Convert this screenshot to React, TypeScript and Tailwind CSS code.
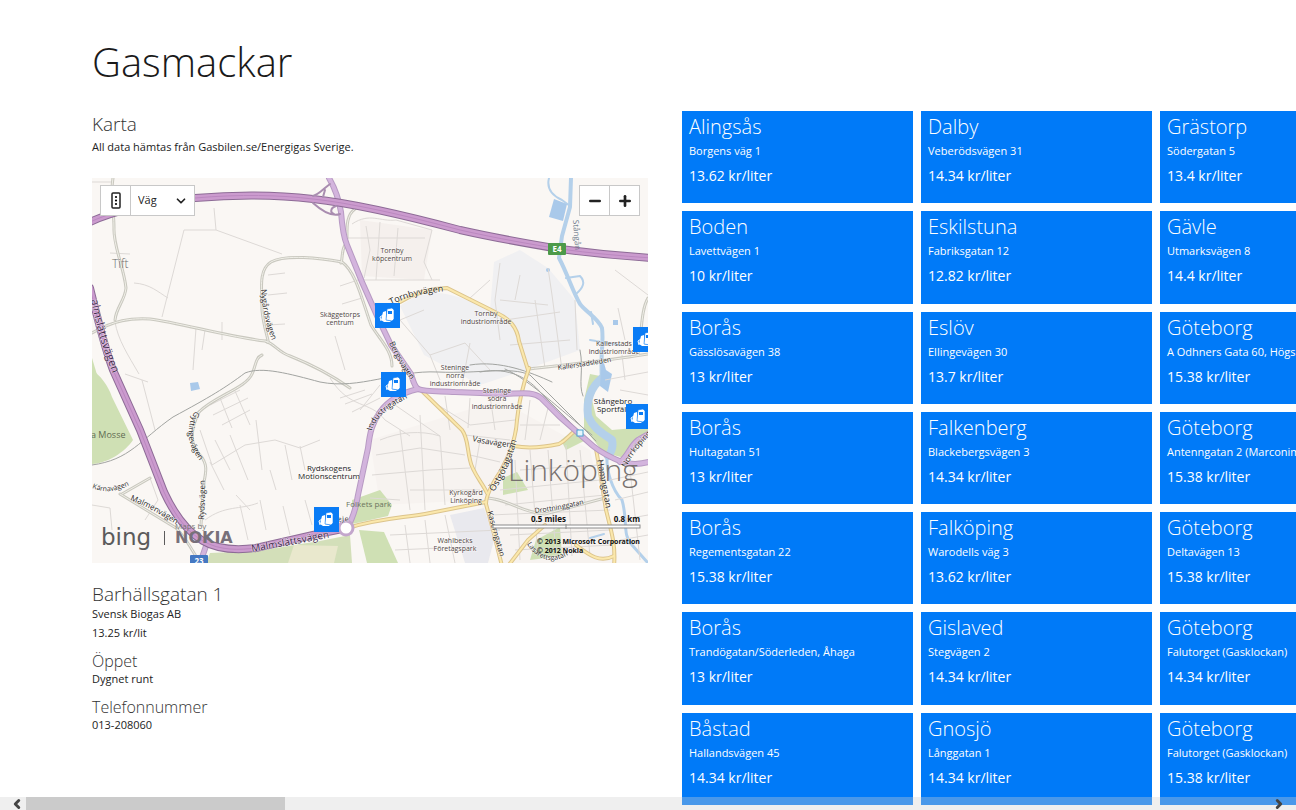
import { ChevronDown, ChevronLeft, ChevronRight, Minus, Plus } from 'lucide-react';

type Station = { city: string; street: string; price: string };

const stations: Station[] = [
  { city: 'Alingsås', street: 'Borgens väg 1', price: '13.62' },
  { city: 'Boden', street: 'Lavettvägen 1', price: '10' },
  { city: 'Borås', street: 'Gässlösavägen 38', price: '13' },
  { city: 'Borås', street: 'Hultagatan 51', price: '13' },
  { city: 'Borås', street: 'Regementsgatan 22', price: '15.38' },
  { city: 'Borås', street: 'Trandögatan/Söderleden, Åhaga', price: '13' },
  { city: 'Båstad', street: 'Hallandsvägen 45', price: '14.34' },
  { city: 'Dalby', street: 'Veberödsvägen 31', price: '14.34' },
  { city: 'Eskilstuna', street: 'Fabriksgatan 12', price: '12.82' },
  { city: 'Eslöv', street: 'Ellingevägen 30', price: '13.7' },
  { city: 'Falkenberg', street: 'Blackebergsvägen 3', price: '14.34' },
  { city: 'Falköping', street: 'Warodells väg 3', price: '13.62' },
  { city: 'Gislaved', street: 'Stegvägen 2', price: '14.34' },
  { city: 'Gnosjö', street: 'Långgatan 1', price: '14.34' },
  { city: 'Grästorp', street: 'Södergatan 5', price: '13.4' },
  { city: 'Gävle', street: 'Utmarksvägen 8', price: '14.4' },
  { city: 'Göteborg', street: 'A Odhners Gata 60, Högsbo', price: '15.38' },
  { city: 'Göteborg', street: 'Antenngatan 2 (Marconimotet)', price: '15.38' },
  { city: 'Göteborg', street: 'Deltavägen 13', price: '15.38' },
  { city: 'Göteborg', street: 'Falutorget (Gasklockan)', price: '14.34' },
  { city: 'Göteborg', street: 'Falutorget (Gasklockan)', price: '15.38' },
];

const MAP_W = 556;
const MAP_H = 385;

const pins = [
  { id: 'tornby', label: 'Tornbyvägen', x: 283, y: 125 },
  { id: 'bergsvagen', label: 'Bergsvägen', x: 289, y: 194 },
  { id: 'kallerstad', label: 'Kallerstad', x: 541, y: 149 },
  { id: 'stangebro', label: 'Stångebro', x: 534, y: 226 },
  { id: 'barhall', label: 'Barhällsgatan 1', x: 222, y: 329 },
];

const motorways = [
  'M88 223 C110 212 150 202 195 198 C240 194 280 195 313 199 C350 203 400 214 460 230 C500 239 530 244 560 249 C590 253 620 256 652 258',
  'M90 288 C98 320 104 346 113 370 L140 430 L164 492 C176 518 188 532 203 541 C220 551 240 550 256 548 L313 535 L347 528',
];

const primaryRoads = [
  'M329 178 C336 190 339 200 341 212 C342 225 343 236 347 245 L362 282 L378 318 L391 345 L411 374 C413 380 414 386 418 389',
  'M418 389 C425 392 440 391 455 392 L505 394 C525 393 534 392 541 398 L560 417 L593 446 C603 454 612 458 622 462 C632 465 640 465 652 461',
  'M418 389 C400 393 388 401 380 412 C372 423 370 432 368 448 L358 495 C356 508 352 520 347 528',
  'M620 462 C628 456 630 446 638 440 L652 432',
  'M206 546 L199 566',
];

const yellowRoads = [
  'M400 302 C415 293 430 288 447 288 L495 312 C510 319 517 327 519 341 L528 370',
  'M529 368 C523 385 519 400 517 420 C516 440 508 458 500 472 C492 484 486 495 486 504 L493 530 L502 566',
  'M422 391 L462 430 C468 438 467 448 470 460 C472 472 482 482 487 493',
  'M348 528 C380 518 405 518 430 513 L486 502',
  'M514 446 C530 449 545 447 559 444 C567 440 569 435 575 431',
  'M596 449 C599 465 602 485 606 510 C611 530 616 545 614 566',
  'M508 566 L528 540 L545 525',
  'M576 545 C590 556 600 563 614 556',
];

const grayRoads = [
  'M113 178 C110 195 114 210 114 228 C113 245 124 268 126 288 C125 300 116 308 115 320',
  'M92 333 C115 320 130 318 150 319 C180 323 230 337 265 341 C275 344 278 352 290 356 C310 364 330 374 350 388',
  'M266 341 C272 347 264 332 262 310 C262 290 258 270 271 262 C285 254 320 258 342 262 C356 272 362 300 371 325 C380 340 392 350 392 366',
  'M345 245 C341 252 343 258 341 263',
  'M262 355 C255 358 256 366 252 374 C246 388 215 396 199 412',
  'M199 412 C190 430 190 445 200 455 C208 464 206 472 204 482 L201 525',
  'M122 494 L150 478 M120 494 L176 528 C188 540 195 556 202 566',
  'M529 369 C560 365 600 362 648 354 M638 355 C642 330 641 310 648 298',
  'M355 209 C346 215 347 228 347 238',
  'M488 498 C510 500 520 512 545 514 L605 498',
];

const railways = [
  'M92 465 C130 460 140 440 173 417 C210 397 225 388 245 373 C262 366 290 374 320 382 C360 390 395 370 438 372 C480 374 510 366 530 375 L596 441',
  'M470 365 C500 360 530 372 552 382 M505 369 C530 380 560 410 592 435 M583 396 C578 384 584 370 580 350',
  'M480 372 C510 366 530 380 540 392 L588 440',
];

const smallStreets = [
  // north and west
  'M92 182 H112 M214 208 L216 230 L184 230 L162 317 M216 230 L282 254 M134 283 C150 284 158 292 168 298 M110 253 L130 254',
  'M115 322 C118 340 128 355 139 374 M196 328 L193 370 M205 330 L202 350 M222 322 L222 340 M268 275 L285 273 M268 295 L287 293 M268 325 L285 324',
  'M335 336 L345 370 M358 280 L340 286 M362 298 L342 304 M352 224 C370 212 380 222 396 220 L432 230 L424 262 L432 280 M366 226 L370 250 L364 278 M380 222 L376 280 M360 280 H440 M398 228 L394 276 M348 238 H425',
  'M500 263 L495 300 L500 340 M500 300 L548 305 M505 320 L560 312 M548 268 L552 295 L562 370 M520 275 L515 300 M510 345 L570 340 M470 298 L490 280 M535 300 L545 368 M575 300 L577 350',
  'M615 270 L648 295 M618 308 L625 340 M622 355 L625 380 M605 380 L648 372 M400 320 L430 355 L465 343 L490 370 M400 320 L424 310 M430 355 L440 380 M470 343 L462 385',
  // Ryd
  'M210 405 L240 390 M213 415 L248 398 M222 425 L250 410 M220 398 L232 428 M235 391 L250 425 M200 430 L212 465 L245 445 L275 440 L300 448 L320 440',
  'M215 440 L230 470 M230 435 L248 480 M256 420 L262 470 M210 462 L224 490 M285 445 L292 480 M300 446 L305 470 M205 520 C225 505 240 510 258 503 M240 505 L248 540 M260 500 L266 530 M283 506 L290 535 M305 500 L312 525',
  'M142 380 L155 430 M125 374 L148 382 M150 478 L158 500 L145 520 M92 505 L110 508 L112 530 M236 495 L250 510 M270 470 L276 490',
  'M330 378 C350 410 370 400 385 420 M340 398 L365 390 M345 404 L372 394 M352 412 L380 398 M380 385 L360 410',
  // city centre
  'M380 440 C400 432 420 430 440 436 M376 455 L420 448 L465 455 M372 475 L430 470 L470 468 M400 430 L410 510 M420 415 L425 510 M440 436 L445 505 M385 420 L410 436 M395 405 L440 436 M410 490 L480 490 M370 498 L400 500',
  'M430 400 L470 425 L515 420 M445 396 L450 430 M470 398 L468 428 M490 396 L495 430 M465 435 L510 440 M480 440 L475 470 M470 455 L500 462 M530 400 L525 440 M548 408 L540 440 M520 425 L560 425',
  'M500 490 L600 480 M505 505 L605 495 M490 515 L610 510 M515 460 L520 560 M530 450 L538 555 M548 450 L556 555 M566 445 L572 556 M580 450 L590 556 M510 535 L610 530 M515 550 L612 545 M520 470 L600 465',
  'M425 520 L430 563 M445 515 L455 563 M405 525 L410 563 M390 535 L500 530 M395 550 L440 548 M610 480 L648 472 M615 500 L648 492 M620 520 L648 515 M620 540 L648 535 M630 470 L640 560 M620 390 L648 395 M610 400 L648 410',
];

const horizontalLabels: Array<{ x: number; y: number; lines: string[]; dark?: boolean }> = [
  { x: 392, y: 253, lines: ['Tornby', 'köpcentrum'] },
  { x: 340, y: 317, lines: ['Skäggetorps', 'centrum'] },
  { x: 486, y: 316, lines: ['Tornby', 'industriområde'] },
  { x: 614, y: 346, lines: ['Kallerstads', 'industriområde'] },
  { x: 455, y: 370, lines: ['Steninge', 'norra', 'industriområde'] },
  { x: 497, y: 393, lines: ['Steninge', 'södra', 'industriområde'] },
  { x: 613, y: 404, lines: ['Stångebro', 'Sportfält'], dark: true },
  { x: 329, y: 471, lines: ['Rydskogens', 'Motionscentrum'], dark: true },
  { x: 466, y: 495, lines: ['Kyrkogård', 'Linköping'] },
  { x: 455, y: 543, lines: ['Wahlbecks', 'Företagspark'] },
];

const roadLabels = [
  { id: 'malmslatt-w', d: 'M91 300 C96 325 102 350 118 386', text: 'almslättsvägen', size: 11 },
  { id: 'malmslatt-s', d: 'M252 552 L312 541 L352 533', text: 'Malmslättsvägen', size: 10 },
  { id: 'nygard', d: 'M261 289 C262 310 266 325 274 346', text: 'Nygårdsvägen', size: 8 },
  { id: 'tornbyvagen', d: 'M391 305 C405 298 420 293 450 291', text: 'Tornbyvägen', size: 9 },
  { id: 'bergs', d: 'M389 343 C396 358 402 370 416 386', text: 'Bergsvägen', size: 8 },
  { id: 'industri', d: 'M372 431 C375 418 388 407 414 395', text: 'Industrigatan', size: 8 },
  { id: 'gyttinge', d: 'M195 411 C184 430 187 448 206 468', text: 'Gyttingevägen', size: 8 },
  { id: 'ryds', d: 'M204 520 C205 505 205 495 205 475', text: 'Rydsvägen', size: 8 },
  { id: 'karna', d: 'M92 488 C105 493 115 493 136 482', text: 'Kärnavägen', size: 7 },
  { id: 'malmen', d: 'M130 500 C146 506 160 514 182 528', text: 'Malmenvägen', size: 8 },
  { id: 'kallerstad', d: 'M558 370 C580 367 595 365 625 359', text: 'Kallerstadsleden', size: 7 },
  { id: 'vasa', d: 'M472 441 C485 444 497 446 518 448', text: 'Vasavägen', size: 8 },
  { id: 'ostgota', d: 'M494 492 C503 478 511 463 518 436', text: 'Östgötagatan', size: 9 },
  { id: 'kasern', d: 'M487 512 C492 528 496 545 504 570', text: 'Kaserngatan', size: 8 },
  { id: 'drottning', d: 'M535 513 C552 511 570 508 600 500', text: 'Drottninggatan', size: 7 },
  { id: 'hamn', d: 'M597 460 C600 478 603 492 607 516', text: 'Hamngatan', size: 9 },
  { id: 'norrkoping', d: 'M626 468 C632 456 638 446 660 426', text: 'Norrköping', size: 8 },
  { id: 'lasarett', d: 'M527 544 C538 562 556 566 575 550', text: 'Lasarettsgatan', size: 7 },
  { id: 'roundabout', d: 'M337 523 C345 518 354 522 362 536', text: 'leje', size: 7 },
];

function MapDrawing() {
  return (
    <svg
      viewBox="92 178 556 385"
      className="block h-full w-full font-['Open_Sans','Noto_Sans',sans-serif]"
      role="img"
      aria-label="Karta över Linköping"
    >
      <rect x="92" y="178" width={MAP_W} height={MAP_H} fill="#faf7f4" />

      <g fill="#f5f0ed">
        <path d="M360 220 L432 230 L424 280 L362 276Z" />
        <path d="M370 440 L500 400 L590 450 L615 563 H500 L480 500 L380 505Z" fill="#f7f3f0" />
      </g>
      <g fill="#f0f0f2">
        <path d="M400 306 C430 285 450 292 490 310 L494 262 L520 250 L548 268 L575 300 L580 350 L528 369 L480 385 L424 355Z" />
        <path d="M450 515 L484 508 L494 540 L488 563 H465Z" fill="#e9e9ee" />
      </g>

      <g fill="#cfe0b4">
        <path d="M92 370 C100 375 108 385 112 397 L133 440 C125 452 108 463 92 464Z" />
        <path d="M92 358 L98 378 L92 380Z" />
        <path d="M210 553 L256 551 L320 541 L350 535 L352 563 H206Z" fill="#d3dfb9" />
        <path d="M352 500 L380 490 L392 505 L388 516 L352 524Z" />
        <path d="M359 530 L384 532 L398 563 H367Z" />
        <path d="M590 374 L600 376 L592 400 L596 416 L612 430 L634 428 L648 420 V436 L624 458 L603 452 L584 428 L584 400Z" />
        <path d="M561 440 L576 428 L586 440 L566 450Z" />
        <path d="M503 478 L517 472 L528 490 L503 495Z" />
        <path d="M536 540 L560 527 L562 556 L530 560Z" />
      </g>
      <path d="M294 545 L338 546 L334 563 H288Z" fill="#e9e8cd" />

      <g fill="none" stroke="#b4d0ea" strokeLinecap="round" strokeLinejoin="round">
        <path d="M571 178 L570 207 L562 236 L559 258 C568 275 572 290 580 304 C586 312 598 318 602 328 C604 345 600 350 602 380" strokeWidth="4" />
        <path d="M549 178 C546 190 553 196 562 200 L570 206" strokeWidth="2" />
        <path d="M566 278 L580 276 C586 282 583 288 576 294" strokeWidth="2" />
        <path d="M602 378 C590 388 586 400 588 416 C594 430 604 434 612 440 C614 448 610 454 608 456" strokeWidth="8" />
        <path d="M607 455 C606 470 612 490 622 500 C628 520 622 535 632 545 L648 563" strokeWidth="3" />
        <path d="M591 312 L593 324 M590 340 L620 345 M590 538 L604 534" strokeWidth="2" />
      </g>
      <g fill="#a9c9ea">
        <path d="M554 199 L567 204 L563 221 L549 217Z" />
        <rect x="613" y="320" width="5" height="5" />
        <circle cx="548" cy="270" r="2" />
        <path d="M190 383 L198 382 L200 389 L191 391Z" />
        <path d="M602 356 L606 370 L612 374 L608 392 L600 386Z" />
      </g>

      <g fill="none" stroke="#ddd9d6" strokeWidth="1">
        {smallStreets.map((d) => (
          <path key={d} d={d} />
        ))}
      </g>

      <g fill="none" strokeLinecap="round">
        {grayRoads.map((d) => (
          <path key={d} d={d} stroke="#c9c8bf" strokeWidth="3" />
        ))}
        {grayRoads.map((d) => (
          <path key={`${d}-in`} d={d} stroke="#f0efe8" strokeWidth="1" />
        ))}
        {railways.map((d) => (
          <path key={d} d={d} stroke="#a2a4a1" strokeWidth="1" />
        ))}
        {yellowRoads.map((d) => (
          <path key={d} d={d} stroke="#dcc48c" strokeWidth="4" />
        ))}
        {yellowRoads.map((d) => (
          <path key={`${d}-in`} d={d} stroke="#fbe8ac" strokeWidth="2" />
        ))}
        {primaryRoads.map((d) => (
          <path key={d} d={d} stroke="#b79ac3" strokeWidth="6" />
        ))}
        {primaryRoads.map((d) => (
          <path key={`${d}-in`} d={d} stroke="#d3b4dd" strokeWidth="4" />
        ))}
        {motorways.map((d) => (
          <path key={d} d={d} stroke="#8d6b96" strokeWidth="8" />
        ))}
        {motorways.map((d) => (
          <path key={`${d}-in`} d={d} stroke="#cb9bce" strokeWidth="6" />
        ))}
        {motorways.map((d) => (
          <path key={`${d}-mid`} d={d} stroke="#bb88c0" strokeWidth="1" />
        ))}
        <path d="M313 196 C320 194 324 188 330 184 M313 203 C322 211 332 217 340 214 M323 197 L325 190 M336 206 C330 208 330 213 334 214" stroke="#a98db0" strokeWidth="2" />
        <circle cx="346" cy="528" r="7" stroke="#c3a6cc" strokeWidth="3" fill="#fff" />
      </g>

      <rect x="548" y="243" width="18" height="12" rx="1" fill="#4c9a4a" />
      <text x="557" y="252" textAnchor="middle" fontSize="8" fontWeight="700" fill="#fff">E4</text>
      <rect x="190" y="555" width="18" height="12" rx="1" fill="#4478c2" />
      <text x="199" y="564" textAnchor="middle" fontSize="8" fontWeight="700" fill="#fff">23</text>
      <rect x="577" y="430" width="6" height="6" fill="#e8f5fb" stroke="#4aa3cf" strokeWidth="1" />

      {horizontalLabels.map((label) => (
        <text
          key={label.lines.join(' ')}
          textAnchor="middle"
          fontSize={label.dark ? 8 : 7}
          fill={label.dark ? '#222' : '#4f4542'}
          stroke="#fff"
          strokeWidth="1"
          strokeOpacity="0.6"
          paintOrder="stroke"
        >
          {label.lines.map((line, i) => (
            <tspan key={line} x={label.x} y={label.y + i * 8}>
              {line}
            </tspan>
          ))}
        </text>
      ))}

      {roadLabels.map((label) => (
        <g key={label.id}>
          <path id={label.id} d={label.d} fill="none" />
          <text
            fontSize={label.size}
            fontWeight={label.size > 9 ? 500 : 400}
            fill={label.size > 9 ? '#3c1f49' : '#2c2a28'}
            stroke="#fff"
            strokeWidth="1"
            strokeOpacity="0.6"
            paintOrder="stroke"
          >
            <textPath href={`#${label.id}`}>{label.text}</textPath>
          </text>
        </g>
      ))}
      <text transform="translate(573 220) rotate(86)" fontSize="8" fill="#6d7b8b">Stångån</text>

      <text x="112" y="268" fontSize="12" fontWeight="300" fill="#6b6b6b">Tift</text>
      <text x="91" y="438" fontSize="9" fill="#5f6b52">a Mosse</text>
      <text x="346" y="507" fontSize="8" fill="#6b7460">Folkets park</text>
      <text x="508" y="481" fontSize="30" fontWeight="300" fill="#77716f">Linköping</text>

      <g fill="#5b5b5b">
        <text x="101" y="545" fontSize="23" className="font-['DejaVu_Sans']">bing</text>
        <rect x="164" y="531" width="1" height="14" />
        <text x="175" y="529" fontSize="8" fill="#777">Maps by</text>
        <text x="175" y="543" fontSize="16" fontWeight="700" className="font-['DejaVu_Sans']" fill="#77707a">NOKIA</text>
      </g>

      <g fill="#111" fontSize="7" fontWeight="700">
        <rect x="493" y="525" width="147" height="3" fill="#fff" stroke="#8a8a8a" strokeWidth="1" />
        <path d="M566 524 V529" stroke="#8a8a8a" />
        <text x="531" y="522" fontSize="8">0.5 miles</text>
        <text x="640" y="522" fontSize="8" textAnchor="end">0.8 km</text>
        <text x="537" y="544">© 2013 Microsoft Corporation</text>
        <text x="537" y="553">© 2012 Nokia</text>
      </g>
    </svg>
  );
}

function PumpIcon() {
  return (
    <svg viewBox="0 0 25 25" className="block h-full w-full" aria-hidden="true">
      <path d="M8 9 L11 8 L11 17 L16 18 L15 19 L9 19 L6 17Z" fill="#fff" />
      <path d="M12 6 L17 5 L19 7 L19 16 L17 18 L11 17Z" fill="#fff" stroke="#0a7cf5" strokeWidth="0.6" />
      <path d="M13 8 L17 8 L17 11 L13 11Z" fill="#0a7cf5" />
      <path d="M8 12 L5 14 L6 18" fill="none" stroke="#fff" strokeWidth="1" />
    </svg>
  );
}

function StationMap() {
  return (
    <div className="relative mt-[23px] aspect-[556/385] w-full overflow-hidden">
      <MapDrawing />

      {pins.map((pin) => (
        <button
          key={pin.id}
          type="button"
          aria-label={pin.label}
          className="absolute h-[25px] w-[25px] bg-[#0a7cf5]"
          style={{ left: `${(pin.x / MAP_W) * 100}%`, top: `${(pin.y / MAP_H) * 100}%` }}
        >
          <PumpIcon />
        </button>
      ))}

      <div className="absolute top-[7px] left-2 flex h-[31px] border border-[#c8c8c8] bg-white text-[#222]">
        <button type="button" aria-label="Trafik" className="flex w-[30px] items-center justify-center border-r border-[#c8c8c8]">
          <svg viewBox="0 0 10 17" className="h-[17px] w-[10px]" aria-hidden="true">
            <rect x="1" y="1" width="8" height="15" rx="1" fill="none" stroke="#222" strokeWidth="1.5" />
            <circle cx="5" cy="5" r="1.1" />
            <circle cx="5" cy="8.5" r="1.1" />
            <circle cx="5" cy="12" r="1.1" />
          </svg>
        </button>
        <div className="relative flex w-[63px] items-center">
          <select aria-label="Karttyp" className="h-full w-full appearance-none bg-transparent pl-[7px] text-[11px] outline-none">
            <option>Väg</option>
            <option>Flygfoto</option>
          </select>
          <ChevronDown className="pointer-events-none absolute right-1.5 h-3.5 w-3.5" strokeWidth={3} />
        </div>
      </div>

      <div className="absolute top-[7px] right-2 flex h-[31px] border border-[#c8c8c8] bg-white text-[#222]">
        <button type="button" aria-label="Zooma ut" className="flex w-[30px] items-center justify-center border-r border-[#c8c8c8]">
          <Minus className="h-4 w-4" strokeWidth={4} />
        </button>
        <button type="button" aria-label="Zooma in" className="flex w-[29px] items-center justify-center">
          <Plus className="h-4 w-4" strokeWidth={4} />
        </button>
      </div>
    </div>
  );
}

function StationDetails() {
  return (
    <div className="mt-[19px] text-[11px] leading-4 text-[#222]">
      <h2 className="text-[19px] leading-6 font-light text-[#333]">Barhällsgatan 1</h2>
      <p>Svensk Biogas AB</p>
      <p className="mt-[3px]">13.25 kr/lit</p>
      <h3 className="mt-2.5 text-base leading-5 font-light text-[#333]">Öppet</h3>
      <p>Dygnet runt</p>
      <h3 className="mt-2.5 text-base leading-5 font-light text-[#333]">Telefonnummer</h3>
      <p>013-208060</p>
    </div>
  );
}

function StationTile({ city, street, price }: Station) {
  return (
    <li className="flex">
      <button type="button" className="flex w-full flex-col overflow-hidden bg-[#007af8] px-[7px] pt-1 text-left whitespace-nowrap text-white">
        <span className="text-xl leading-6 font-light">{city}</span>
        <span className="mt-1 text-[11px] leading-4">{street}</span>
        <span className="mt-[7px] text-sm leading-5">{price} kr/liter</span>
      </button>
    </li>
  );
}

function HubScrollbar() {
  return (
    <div className="absolute inset-x-0 bottom-0 flex h-[13px] items-center bg-[#d2d2d2]/35 text-[#444]">
      <button type="button" aria-label="Bläddra vänster" className="flex w-[26px] justify-center pl-2">
        <ChevronLeft className="h-3.5 w-3.5" strokeWidth={5} />
      </button>
      <div className="h-full flex-1">
        <div className="h-full w-5/24 bg-[#cbcbcb]" />
      </div>
      <button type="button" aria-label="Bläddra höger" className="flex w-[26px] justify-center pr-2">
        <ChevronRight className="h-3.5 w-3.5" strokeWidth={5} />
      </button>
    </div>
  );
}

export default function App() {
  return (
    <div className="relative flex min-h-screen flex-col overflow-hidden bg-white pb-[5px] font-['Open_Sans','Noto_Sans',sans-serif]">
      <header className="pt-8 pl-[92px]">
        <h1 className="text-[40px] leading-[60px] font-light text-[#1a1a1a]">Gasmackar</h1>
      </header>

      <main className="mt-[19px] grid flex-1 grid-cols-[minmax(0,556fr)_minmax(0,614fr)] gap-[34px] pl-[92px]">
        <section>
          <h2 className="text-[19px] leading-[26px] font-light text-[#333]">Karta</h2>
          <p className="mt-0.5 text-[11px] leading-4 text-[#222]">All data hämtas från Gasbilen.se/Energigas Sverige.</p>
          <StationMap />
          <StationDetails />
        </section>

        <section aria-label="Stationer" className="flex overflow-hidden">
          <ul className="grid flex-1 auto-cols-[231px] grid-flow-col grid-rows-7 gap-2">
            {stations.map((station, i) => (
              <StationTile key={i} {...station} />
            ))}
          </ul>
        </section>
      </main>

      <HubScrollbar />
    </div>
  );
}
